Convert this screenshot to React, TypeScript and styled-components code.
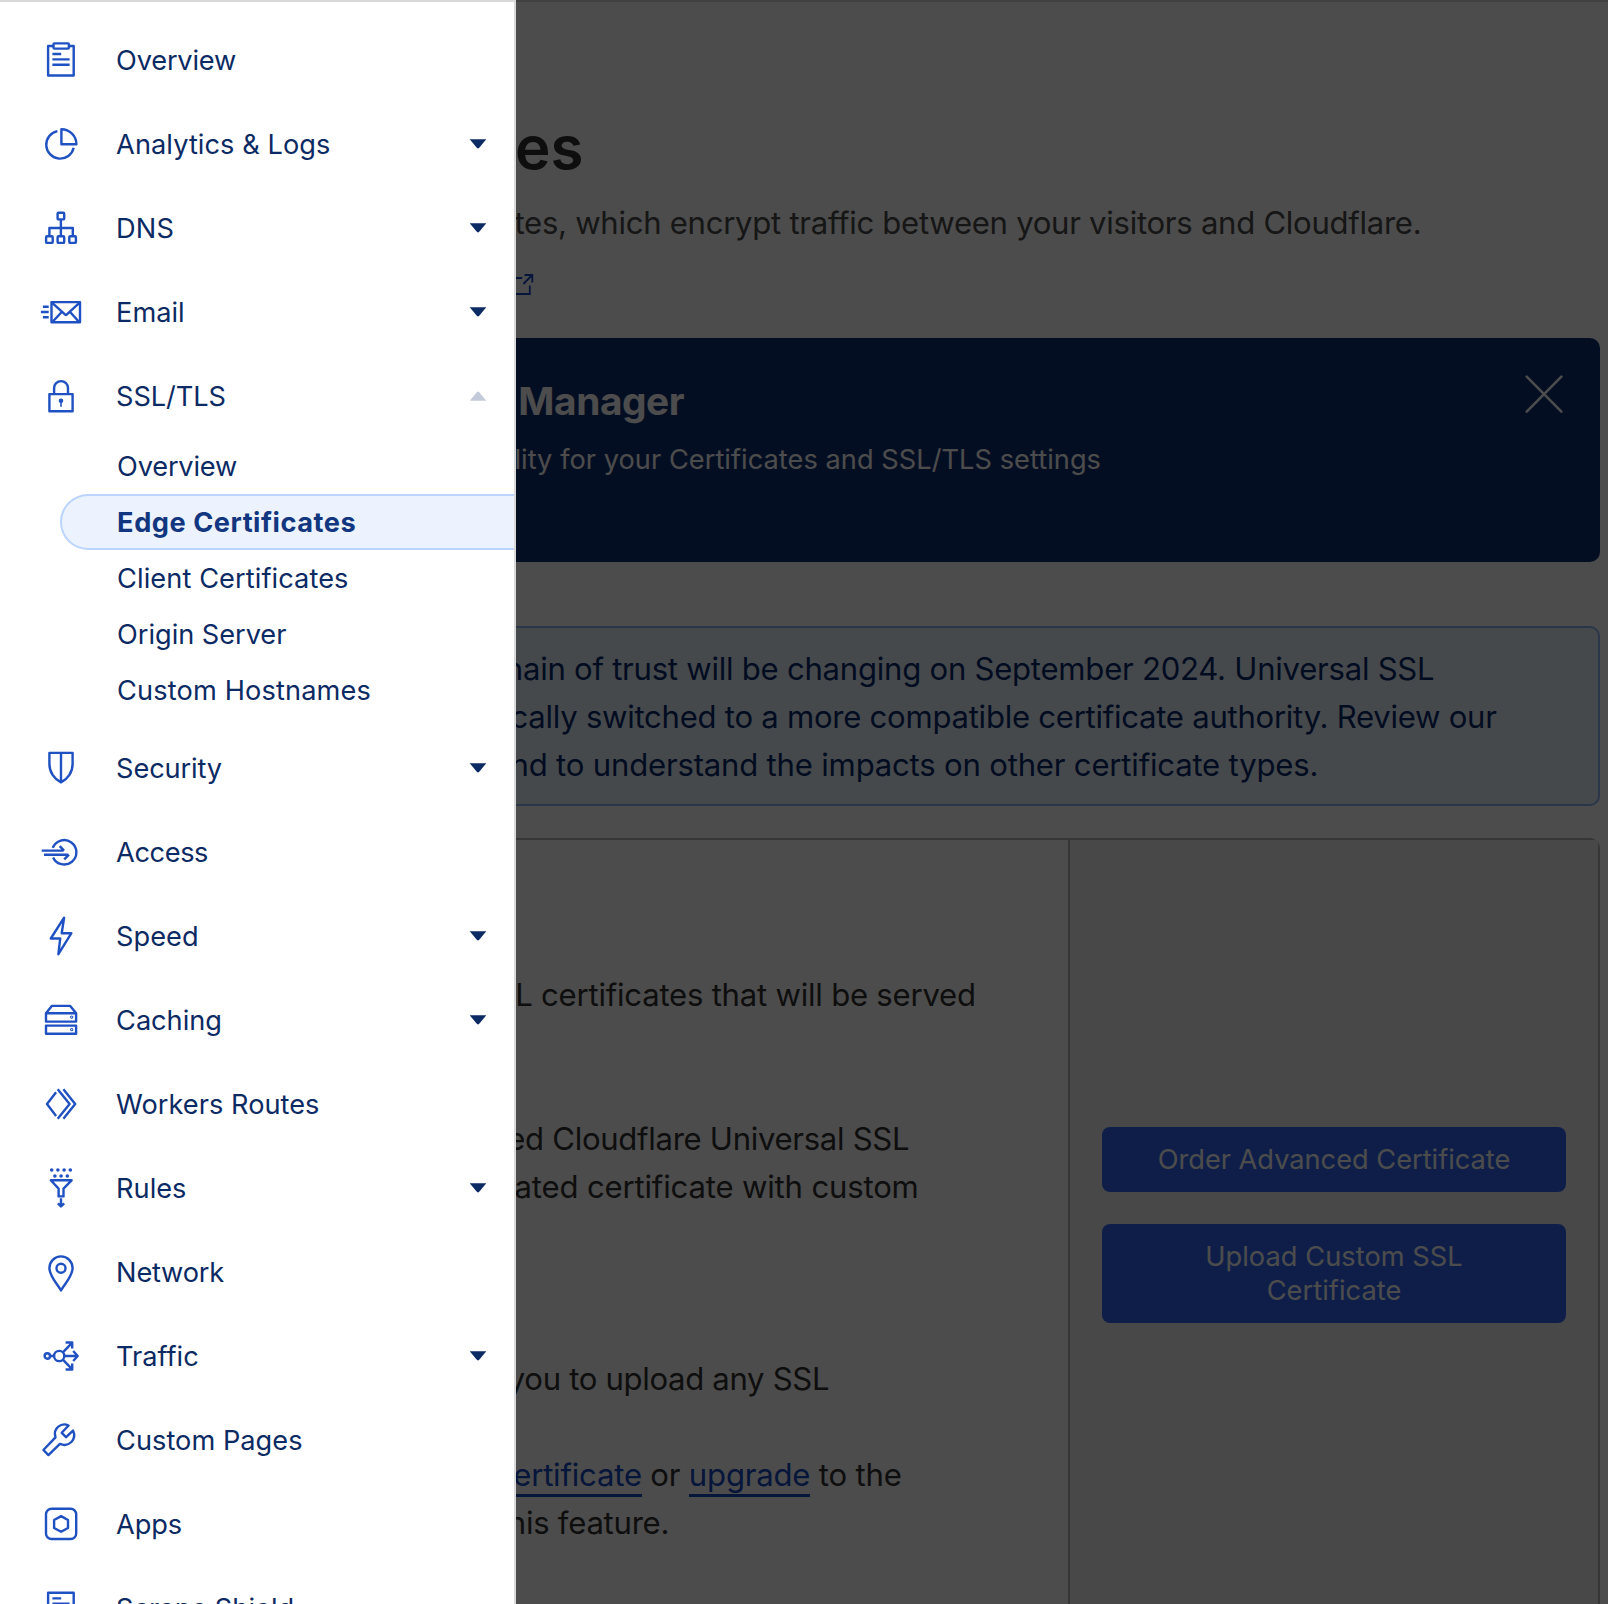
import React from "react";
import styled, { createGlobalStyle } from "styled-components";

const color = {
  ink: "#0c2a63",
  active: "#12367f",
  icon: "#1f51c2",
  rule: "#d9d9d9",
  link: "#1648c2",
};

const GlobalStyle = createGlobalStyle`
  *, *::before, *::after { box-sizing: border-box; }
  html, body { margin: 0; padding: 0; overflow: hidden; }
  body { background: #fff; font-family: Inter, "Noto Sans", sans-serif; }
`;

/* ---------- frame ---------- */

const Shell = styled.div`
  display: grid;
  grid-template-columns: 516px minmax(0, 1fr);
  width: 1608px;
  height: 1604px;
  overflow: hidden;
`;

const Drawer = styled.nav`
  height: 1604px;
  overflow: hidden;
  padding-top: 16px;
  background: #fff;
  border-top: 2px solid ${color.rule};
  border-right: 2px solid ${color.rule};
`;

const PageArea = styled.div`
  position: relative;
  height: 1604px;
  overflow: hidden;
`;

const Scrim = styled.div`
  position: absolute;
  inset: 0;
  background: rgba(0, 0, 0, 0.7);
`;

/* ---------- navigation ---------- */

const NavRow = styled.a`
  display: flex;
  align-items: center;
  height: 84px;
  padding-left: 41px;
  padding-right: 28px;
  color: ${color.ink};
  text-decoration: none;
`;

const NavIcon = styled.svg`
  flex: none;
  width: 40px;
  height: 40px;
  overflow: visible;
  fill: none;
  stroke: ${color.icon};
  stroke-width: 2.4;
  stroke-linejoin: round;
`;

const NavLabel = styled.span<{ $track?: number }>`
  flex: 1;
  margin-left: 35.1px;
  padding-top: 1px;
  font-size: 27.2px;
  line-height: 33px;
  white-space: nowrap;
  letter-spacing: ${(p) => p.$track ?? 0}px;
`;

const Caret = styled.svg<{ $open?: boolean }>`
  width: 16px;
  height: 10px;
  overflow: visible;
  fill: ${(p) => (p.$open ? "#c3cad9" : color.ink)};
  transform: ${(p) => (p.$open ? "rotate(180deg)" : "none")};
`;

const SubList = styled.div`
  padding-bottom: 8px;
`;

const SubItem = styled.a<{ $active?: boolean; $track?: number }>`
  display: flex;
  align-items: center;
  height: 56px;
  margin-left: 60px;
  padding-left: 55.1px;
  padding-top: 1px;
  border: 2px solid ${(p) => (p.$active ? "#bad4fd" : "transparent")};
  border-right: 0;
  border-radius: 28px 0 0 28px;
  background: ${(p) => (p.$active ? "#ecf3fe" : "transparent")};
  color: ${(p) => (p.$active ? color.active : color.ink)};
  font-size: 27.2px;
  font-weight: ${(p) => (p.$active ? 700 : 400)};
  line-height: 33px;
  letter-spacing: ${(p) => p.$track ?? 0}px;
  white-space: nowrap;
  text-decoration: none;
`;

/* ---------- page ---------- */

const Page = styled.main`
  height: 100%;
  padding: 109px 8px 0 0;
  border-top: 2px solid ${color.rule};
  background: #fff;
`;

/* A line whose beginning runs under the drawer: $end is its right edge from the drawer. */
const Line = styled.div<{ $end: number; $track?: number }>`
  display: flex;
  justify-content: flex-end;
  width: ${(p) => p.$end}px;
  white-space: pre;
  letter-spacing: ${(p) => p.$track ?? 0}px;
`;

const Title = styled(Line)`
  color: #313131;
  font-size: 60px;
  font-weight: 600;
  line-height: 72px;
`;

const Description = styled(Line)`
  margin-top: 16px;
  color: #4a4a4a;
  font-size: 31.1px;
  line-height: 48px;
`;

const HelpRow = styled.div`
  height: 30px;
  margin-top: 23px;
`;

const ExternalIcon = styled.svg`
  display: block;
  width: 24px;
  height: 30px;
  fill: none;
  stroke: ${color.link};
  stroke-width: 1.8;
`;

const Banner = styled.section`
  display: flex;
  justify-content: space-between;
  height: 224px;
  margin-top: 38px;
  padding: 36px 36px 0 0;
  border-radius: 0 10px 10px 0;
  background: #102f73;
  color: #fff;
`;

const BannerTitle = styled(Line)`
  margin-top: 3px;
  font-size: 38.8px;
  font-weight: 700;
  line-height: 48px;
`;

const BannerText = styled(Line)`
  margin-top: 15px;
  font-size: 27.2px;
  line-height: 40px;
`;

const CloseIcon = styled.svg`
  width: 40px;
  height: 40px;
  fill: none;
  stroke: #fff;
  stroke-width: 2.6;
  stroke-linecap: round;
`;

const Alert = styled.section`
  height: 180px;
  margin-top: 64px;
  padding-top: 17px;
  border: 2px solid #8cb4f4;
  border-left: 0;
  border-radius: 0 10px 10px 0;
  background: #ecf3fe;
  color: #052b6e;
  font-size: 31.1px;
  line-height: 48px;
`;

const Card = styled.section`
  display: flex;
  height: 900px;
  margin-top: 32px;
  border: 2px solid #b5b5b5;
  border-left: 0;
  border-radius: 0 10px 0 0;
`;

const CardBody = styled.div`
  flex: 1;
  min-width: 0;
  padding-top: 131px;
  color: #313131;
  font-size: 31.1px;
  line-height: 48px;
`;

const Paragraph = styled.div<{ $gap?: number }>`
  margin-top: ${(p) => p.$gap ?? 0}px;
`;

const Link = styled.a`
  color: ${color.link};
  border-bottom: 3px solid ${color.link};
`;

const CardActions = styled.div`
  display: flex;
  flex-direction: column;
  gap: 32px;
  width: 530px;
  padding: 287px 32px 0;
  border-left: 2px solid #b5b5b5;
  background: #f2f2f2;
`;

const Button = styled.button<{ $track?: number }>`
  padding: 16px 48px 15px;
  border: 0;
  border-radius: 8px;
  background: #2f67f3;
  color: #fff;
  font: 400 27.2px/34px Inter, "Noto Sans", sans-serif;
  letter-spacing: ${(p) => p.$track ?? 0}px;
  text-align: center;
`;

/* ---------- icons (40 × 40) ---------- */

const icons: Record<string, React.ReactNode> = {
  clipboard: (
    <>
      <path d="M12.3 6H7.1v29.5h25.6V6h-5" />
      <rect x="12.5" y="3.4" width="15.4" height="5.2" rx="1" />
      <path d="M11.4 14h8.8M11.4 19.4h17.2M11.4 24.7h17.2" />
    </>
  ),
  pie: (
    <>
      <path d="M20.4 5.2V20.3H35.4A15.2 15.2 0 0 0 20.4 5.2Z" />
      <path d="M16.4 7.1A13.9 13.9 0 1 0 32.7 23.8" />
    </>
  ),
  tree: (
    <>
      <rect x="16.6" y="4.8" width="6.6" height="6.6" rx="1" />
      <rect x="5.1" y="28.3" width="6.6" height="6.6" rx="1" />
      <rect x="16.6" y="28.3" width="6.6" height="6.6" rx="1" />
      <rect x="28.3" y="28.3" width="6.6" height="6.6" rx="1" />
      <path d="M19.9 11.4v16.9M8.4 28.3V20H31.8v8.3" />
    </>
  ),
  mail: (
    <>
      <rect x="10.5" y="10.1" width="28.5" height="20.2" />
      <path d="M11.2 10.8 24.2 22.6q.7.6 1.4 0L38.4 10.8M11.6 29.8l8.9-9.5M37.9 29.8l-8.6-9.5" />
      <path d="M1.9 14.7h5.8M-.1 20h7.8M1.9 25.3h5.8" />
    </>
  ),
  lock: (
    <>
      <rect x="8.4" y="18.1" width="23.2" height="17.1" />
      <path d="M13.1 18v-5.9a6.9 6.9 0 0 1 13.9 0V18" />
      <circle cx="20" cy="24.8" r="1.1" />
      <path d="M20 25v5.8" strokeWidth="1.6" />
    </>
  ),
  shield: <path d="M8.4 4.9H31.6V16C31.6 24 27 31 20 34.3 13 31 8.4 24 8.4 16ZM20 5V34" />,
  access: (
    <>
      <path d="M11.8 15.9A12.2 12.2 0 1 1 12.1 25.4" />
      <path d="M.7 18.6H22.6M18.7 14.2 23.1 18.7M3 22.8H27.4M28 22.6l-4.8 4.8" />
    </>
  ),
  bolt: <path d="M23.1 1.7 9.8 22.5h9.4L17.4 38.2 30.4 17.2H20.7Z" />,
  server: (
    <>
      <rect x="5" y="13.3" width="30.1" height="8.3" />
      <rect x="5" y="25.6" width="30.1" height="8.1" />
      <path d="M5.2 13 10.8 5.9H29.2L35 13" />
      <circle cx="30.7" cy="17.1" r=".5" />
      <circle cx="30.7" cy="29.6" r=".5" />
    </>
  ),
  workers: (
    <path d="M15.1 8.2 6 20l9.1 12M16.7 5.2 28.6 20 16.7 34.8M22.4 5.2 34.2 20 22.4 34.8" />
  ),
  funnel: (
    <>
      <path d="M9.8 12.3H30.6L22.5 20.6V28.4H17.6V20.6Z" />
      <path d="M20 30.3v8M16.9 35.4 20 38.4l3.2-3" />
      <g fill={color.icon} stroke="none">
        <circle cx="10.7" cy="2" r="1.8" />
        <circle cx="16.9" cy="2" r="1.8" />
        <circle cx="23.1" cy="2" r="1.8" />
        <circle cx="29.3" cy="2" r="1.8" />
        <circle cx="13.9" cy="8" r="1.8" />
        <circle cx="20.1" cy="8" r="1.8" />
        <circle cx="26.3" cy="8" r="1.8" />
      </g>
    </>
  ),
  pin: (
    <>
      <path d="M20 38.4C16 31.6 8.4 24 8.4 16A11.6 11.6 0 0 1 31.6 16C31.6 24 24 31.6 20 38.4Z" />
      <circle cx="20" cy="16.3" r="4.5" />
    </>
  ),
  traffic: (
    <>
      <circle cx="6.3" cy="20" r="2.7" />
      <circle cx="18.2" cy="20" r="5.1" />
      <path d="M9 20h4M23.3 20H36.4M32.2 15l4.5 5-4.5 5" />
      <path d="M21.9 16.3 31 6.8M24.6 6.5H31.2v6M21.9 23.7l9.1 9.5M24.6 33.5H31.2v-6" />
    </>
  ),
  wrench: (
    <path d="M27.6 5.5C20.6 2 11.6 8 14.5 17.4L2.4 30l5 5.1L18.9 23.9C27.8 27.6 36.2 19.6 32 10.6L25.1 17.2 20.7 12.8Z" />
  ),
  apps: (
    <>
      <rect x="5" y="4.8" width="30.2" height="30.2" rx="5.5" />
      <path d="M20.1 12.1 27 16v8l-6.9 3.8L13.1 24V16Z" />
    </>
  ),
  document: (
    <>
      <rect x="7.1" y="4.8" width="25.6" height="30" />
      <path d="M11.4 10.4h8.8M11.4 15.7h17.2M11.4 21h17.2" />
    </>
  ),
};

type Sub = { label: string; track: number; active?: boolean };
type Item = { label: string; icon: string; track: number; menu?: boolean; subs?: Sub[] };

const items: Item[] = [
  { label: "Overview", icon: "clipboard", track: -0.2 },
  { label: "Analytics & Logs", icon: "pie", track: 0.06, menu: true },
  { label: "DNS", icon: "tree", track: 0.1, menu: true },
  { label: "Email", icon: "mail", track: 0, menu: true },
  {
    label: "SSL/TLS",
    icon: "lock",
    track: -0.08,
    menu: true,
    subs: [
      { label: "Overview", track: -0.2 },
      { label: "Edge Certificates", track: 0.52, active: true },
      { label: "Client Certificates", track: 0.08 },
      { label: "Origin Server", track: -0.04 },
      { label: "Custom Hostnames", track: 0.13 },
    ],
  },
  { label: "Security", icon: "shield", track: -0.13, menu: true },
  { label: "Access", icon: "access", track: -0.4 },
  { label: "Speed", icon: "bolt", track: 0, menu: true },
  { label: "Caching", icon: "server", track: -0.05, menu: true },
  { label: "Workers Routes", icon: "workers", track: 0.02 },
  { label: "Rules", icon: "funnel", track: 0, menu: true },
  { label: "Network", icon: "pin", track: -0.2 },
  { label: "Traffic", icon: "traffic", track: -0.02, menu: true },
  { label: "Custom Pages", icon: "wrench", track: 0.02 },
  { label: "Apps", icon: "apps", track: -0.1 },
  { label: "Scrape Shield", icon: "document", track: 0.02 },
];

function NavItem({ item }: { item: Item }) {
  return (
    <>
      <NavRow>
        <NavIcon viewBox="0 0 40 40">{icons[item.icon]}</NavIcon>
        <NavLabel $track={item.track}>{item.label}</NavLabel>
        {item.menu && (
          <Caret viewBox="0 0 16 10" $open={!!item.subs}>
            <path d="M-.3 .3H16.3L9 9.1q-1 .9-2 0Z" />
          </Caret>
        )}
      </NavRow>
      {item.subs && (
        <SubList>
          {item.subs.map((s) => (
            <SubItem key={s.label} $active={s.active} $track={s.track}>
              {s.label}
            </SubItem>
          ))}
        </SubList>
      )}
    </>
  );
}

export default function App() {
  return (
    <>
      <GlobalStyle />
      <Shell>
        <Drawer>
          {items.map((item) => (
            <NavItem key={item.label} item={item} />
          ))}
        </Drawer>
        <PageArea>
          <Page>
            <Title $end={67.4}>es</Title>
            <Description $end={905.4} $track={-0.28}>
              tes, which encrypt traffic between your visitors and Cloudflare.
            </Description>
            <HelpRow>
              <ExternalIcon viewBox="0 0 24 30">
                <path d="M0 8H6.2M0 24H13.8V15.6M7.4 14 16.2 5M8.6 5H16.3V12.4" />
              </ExternalIcon>
            </HelpRow>
            <Banner>
              <div>
                <BannerTitle $end={168.2} $track={-0.42}>
                  Manager
                </BannerTitle>
                <BannerText $end={585} $track={0.04}>
                  lity for your Certificates and SSL/TLS settings
                </BannerText>
              </div>
              <CloseIcon viewBox="0 0 40 40">
                <path d="M2.7 2.7 37.4 37.6M37.4 2.7 2.7 37.6" />
              </CloseIcon>
            </Banner>
            <Alert>
              <Line $end={918.4} $track={-0.25}>
                hain of trust will be changing on September 2024. Universal SSL
              </Line>
              <Line $end={980.6} $track={-0.264}>
                cally switched to a more compatible certificate authority. Review our
              </Line>
              <Line $end={802.2} $track={-0.196}>
                nd to understand the impacts on other certificate types.
              </Line>
            </Alert>
            <Card>
              <CardBody>
                <Paragraph>
                  <Line $end={459.8} $track={-0.225}>
                    L certificates that will be served
                  </Line>
                </Paragraph>
                <Paragraph $gap={96}>
                  <Line $end={393.3} $track={-0.3}>
                    ed Cloudflare Universal SSL
                  </Line>
                  <Line $end={402.7} $track={-0.17}>
                    ated certificate with custom
                  </Line>
                </Paragraph>
                <Paragraph $gap={144}>
                  <Line $end={313.2} $track={-0.32}>
                    you to upload any SSL
                  </Line>
                </Paragraph>
                <Paragraph $gap={48}>
                  <Line $end={385.6} $track={-0.2}>
                    <span>
                      <Link>ertificate</Link> or <Link>upgrade</Link> to the
                    </span>
                  </Line>
                  <Line $end={153.2} $track={-0.25}>
                    his feature.
                  </Line>
                </Paragraph>
              </CardBody>
              <CardActions>
                <Button>Order Advanced Certificate</Button>
                <Button $track={0.06}>
                  Upload Custom SSL
                  <br />
                  Certificate
                </Button>
              </CardActions>
            </Card>
          </Page>
          <Scrim />
        </PageArea>
      </Shell>
    </>
  );
}
